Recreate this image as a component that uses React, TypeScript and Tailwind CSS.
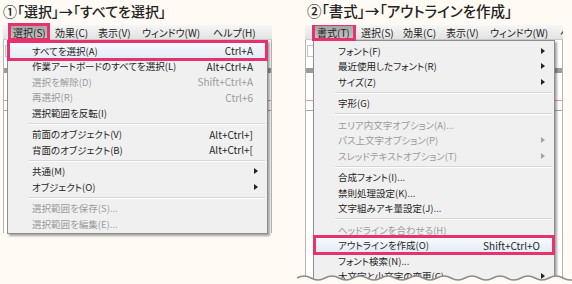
import React from 'react';

type Entry = {
  label: string;
  keys?: string;
  sub?: boolean;
  off?: boolean;
  hit?: boolean;
} | null;

type BarItem = { label: string; w: number; hit?: boolean };

const selectMenu: Entry[] = [
  { label: 'すべてを選択(A)', keys: 'Ctrl+A', hit: true },
  { label: '作業アートボードのすべてを選択(L)', keys: 'Alt+Ctrl+A' },
  { label: '選択を解除(D)', keys: 'Shift+Ctrl+A', off: true },
  { label: '再選択(R)', keys: 'Ctrl+6', off: true },
  { label: '選択範囲を反転(I)' },
  null,
  { label: '前面のオブジェクト(V)', keys: 'Alt+Ctrl+]' },
  { label: '背面のオブジェクト(B)', keys: 'Alt+Ctrl+[' },
  null,
  { label: '共通(M)', sub: true },
  { label: 'オブジェクト(O)', sub: true },
  null,
  { label: '選択範囲を保存(S)...', off: true },
  { label: '選択範囲を編集(E)...', off: true },
];

const typeMenu: Entry[] = [
  { label: 'フォント(F)', sub: true },
  { label: '最近使用したフォント(R)', sub: true },
  { label: 'サイズ(Z)', sub: true },
  null,
  { label: '字形(G)' },
  null,
  { label: 'エリア内文字オプション(A)...', off: true },
  { label: 'パス上文字オプション(P)', sub: true, off: true },
  { label: 'スレッドテキストオプション(T)', sub: true, off: true },
  null,
  { label: '合成フォント(I)...' },
  { label: '禁則処理設定(K)...' },
  { label: '文字組みアキ量設定(J)...' },
  null,
  { label: 'ヘッドラインを合わせる(H)', off: true },
  { label: 'アウトラインを作成(O)', keys: 'Shift+Ctrl+O', hit: true },
  { label: 'フォント検索(N)...' },
  { label: '大文字と小文字の変更(C)', sub: true },
];

const leftBar: BarItem[] = [
  { label: '選択(S)', w: 42, hit: true },
  { label: '効果(C)', w: 43 },
  { label: '表示(V)', w: 44 },
  { label: 'ウィンドウ(W)', w: 71 },
  { label: 'ヘルプ(H)', w: 55 },
];

const rightBar: BarItem[] = [
  { label: '書式(T)', w: 44, hit: true },
  { label: '選択(S)', w: 42 },
  { label: '効果(C)', w: 43 },
  { label: '表示(V)', w: 44 },
  { label: 'ウィンドウ(W)', w: 70 },
  { label: 'ヘルプ(H)', w: 55 },
];

function Arrow({ off }: { off?: boolean }) {
  return (
    <span
      className={`block h-0 w-0 border-y-[3px] border-l-[4px] border-y-transparent ${
        off ? 'border-l-[#a3a3a3]' : 'border-l-[#222]'
      }`}
    />
  );
}

function Row({ e }: { e: NonNullable<Entry> }) {
  return (
    <div
      className={`relative flex h-[15.5px] items-center pl-[24px] pr-[9px] ${
        e.hit ? 'bg-gradient-to-b from-[#f7f9fc] to-[#e4ebf5]' : ''
      } ${e.off ? 'text-[#9b9b9b]' : 'text-[#1f1f1f]'}`}
    >
      <span className="flex-1 whitespace-nowrap">{e.label}</span>
      {e.keys && <span className="mr-px whitespace-nowrap text-[10px]">{e.keys}</span>}
      <span className="flex w-[4px] justify-end">{e.sub && <Arrow off={e.off} />}</span>
      {e.hit && (
        <span className="absolute -top-[3px] -bottom-[2px] -left-[1px] -right-[1px] border-[3px] border-[#e6336d]" />
      )}
    </div>
  );
}

function Dropdown({ entries, className }: { entries: Entry[]; className: string }) {
  return (
    <div
      className={`absolute top-[15px] border border-[#8e8e8e] bg-[#f0f0f0] pt-[2px] pb-[1px] text-[9.5px] shadow-[2px_2px_2px_rgba(0,0,0,0.35)] ${className}`}
    >
      {entries.map((e, i) =>
        e ? (
          <Row key={i} e={e} />
        ) : (
          <div key={i} className="flex h-[6px] items-center pl-[21px] pr-[2px]">
            <div className="h-[2px] w-full border-t border-b border-t-[#d7d7d7] border-b-white" />
          </div>
        )
      )}
    </div>
  );
}

function MenuBar({ items, lead }: { items: BarItem[]; lead: string }) {
  return (
    <div
      className={`relative z-10 flex h-[15px] items-stretch border-b border-[#c9c9c9] bg-gradient-to-b from-[#f6f6f6] to-[#e2e2e2] text-[10px] text-[#222] ${lead}`}
    >
      {items.map((it) => (
        <div
          key={it.label}
          className={`relative flex shrink-0 items-center whitespace-nowrap pl-[5px] ${
            it.hit ? 'bg-gradient-to-b from-[#a4a4a4] to-[#c3c3c3]' : ''
          }`}
          style={{ width: it.w }}
        >
          {it.label}
          {it.hit && (
            <span className="absolute -top-[2px] -bottom-[2px] left-0 right-0 border-[3px] border-[#e6336d]" />
          )}
        </div>
      ))}
    </div>
  );
}

function Backdrop({ tall }: { tall: boolean }) {
  return (
    <div className={`flex flex-col border-x border-[#b5b5b5] bg-white ${tall ? 'h-[244px]' : 'h-[193px]'}`}>
      <div className="mt-[5px] ml-[1px] h-[12px] w-[10px] border border-[#c4c4c4]" />
      <div className="mt-[11px] h-[5px] bg-[#9c9c9c]" />
      <div className="mt-[27px] h-px bg-[#f19393]" />
      <div className="mt-[9px] h-px bg-[#a8a8a8]" />
    </div>
  );
}

const wave = (() => {
  let d = 'M0 5';
  for (let x = 0; x < 290; x += 14) {
    const up = Math.round(x / 14) % 2 === 0;
    d += ` Q${x + 7} ${up ? 1 : 9} ${x + 14} 5`;
  }
  return d;
})();

export default function App() {
  return (
    <div className="relative flex h-[284px] w-[572px] overflow-hidden bg-[#fffaf3] font-['Noto_Sans_CJK_JP',sans-serif] [font-feature-settings:'palt']">
      <div className="ml-[3px] flex w-[269px] shrink-0 flex-col">
        <div className="h-[22px] whitespace-nowrap text-[14px] leading-[22px] font-medium text-[#222]">
          ①「選択」→「すべてを選択」
        </div>
        <div className="relative mt-[3px]">
          <MenuBar items={leftBar} lead="pl-[5px]" />
          <Backdrop tall={false} />
          <Dropdown entries={selectMenu} className="left-[4px] w-[261px]" />
        </div>
      </div>

      <div className="ml-[33px] flex w-[258px] shrink-0 flex-col">
        <div className="h-[22px] whitespace-nowrap pl-[2px] text-[14.5px] leading-[22px] font-medium text-[#222]">
          ②「書式」→「アウトラインを作成」
        </div>
        <div className="relative mt-[3px] overflow-hidden">
          <MenuBar items={rightBar} lead="pl-[7px]" />
          <Backdrop tall={true} />
          <Dropdown entries={typeMenu} className="left-[8px] w-[242px]" />
        </div>
      </div>

      <svg className="absolute left-[297px] top-[273px]" width="280" height="14" viewBox="0 0 280 14">
        <path d={`${wave} L290 14 L0 14 Z`} fill="#fffaf3" />
        <path d={wave} fill="none" stroke="#8c8c8c" strokeWidth="1.6" />
      </svg>
    </div>
  );
}
